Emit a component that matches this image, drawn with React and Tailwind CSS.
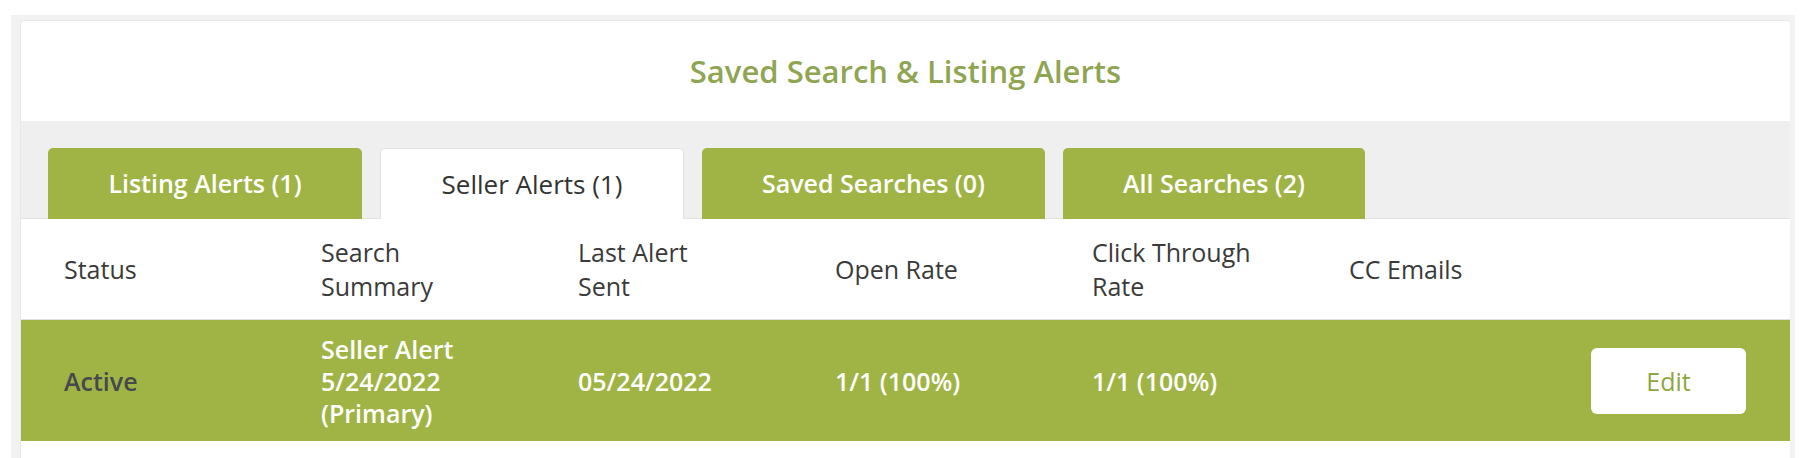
import React from 'react';

const tabs = [
  { label: 'Listing Alerts (1)', width: 'w-[314px]' },
  { label: 'Seller Alerts (1)', width: 'w-[304px]', active: true },
  { label: 'Saved Searches (0)', width: 'w-[343px]' },
  { label: 'All Searches (2)', width: 'w-[302px]' },
];

const Cell = ({ children, className = '' }) => (
  <div className={`w-[257px] shrink-0 pl-[43px] ${className}`}>{children}</div>
);

export default function App() {
  return (
    <div className="min-h-[458px] bg-white pt-[15px] pl-[11px] pr-[8px] font-['Open_Sans',sans-serif]">
      <div className="bg-[#f2f2f2] pt-[5px] pl-[9px] pr-[5px]">
        <div className="bg-white rounded-tl-[4px] rounded-tr-[4px] border-t border-l border-[#e8e8e8] overflow-hidden">
          {/* Title */}
          <div className="h-[100px] flex items-center justify-center">
            <h1 className="text-[31px] font-semibold text-[#8fa552]">
              Saved Search &amp; Listing Alerts
            </h1>
          </div>

          {/* Tabs */}
          <div className="h-[98px] bg-[#efefef] flex items-end gap-[18px] pl-[27px] border-b border-[#e2e2e2]">
            {tabs.map((t) => (
              <div
                key={t.label}
                className={`${t.width} h-[71px] -mb-px rounded-t-[5px] flex items-center justify-center text-[25px] ${
                  t.active
                    ? 'bg-white text-[#333] border border-b-0 border-[#e2e2e2] text-[26px]'
                    : 'bg-[#a0b445] text-white font-semibold'
                }`}
              >
                {t.label}
              </div>
            ))}
          </div>

          {/* Header row */}
          <div className="h-[100px] flex items-center text-[25px] leading-[34px] text-[#3a3a3a]">
            <Cell>Status</Cell>
            <Cell>
              <span className="block">Search</span>
              <span className="block">Summary</span>
            </Cell>
            <Cell>
              <span className="block">Last Alert</span>
              <span className="block">Sent</span>
            </Cell>
            <Cell>Open Rate</Cell>
            <Cell>
              <span className="block">Click Through</span>
              <span className="block">Rate</span>
            </Cell>
            <Cell>CC Emails</Cell>
          </div>

          {/* Data row */}
          <div className="h-[122px] bg-[#a0b445] border-t border-[#e0e0e0] flex items-center text-[25px] leading-[32px] font-semibold text-white">
            <Cell className="text-[#45494e]">Active</Cell>
            <Cell>
              <span className="block">Seller Alert</span>
              <span className="block">5/24/2022</span>
              <span className="block">(Primary)</span>
            </Cell>
            <Cell>05/24/2022</Cell>
            <Cell>1/1 (100%)</Cell>
            <Cell>1/1 (100%)</Cell>
            <Cell />
            <div className="flex-1 flex justify-end pr-[44px]">
              <button className="w-[155px] h-[66px] bg-white rounded-[6px] text-[#8fa540] text-[25px] font-normal">
                Edit
              </button>
            </div>
          </div>

          <div className="h-[18px] bg-white" />
        </div>
      </div>
    </div>
  );
}
